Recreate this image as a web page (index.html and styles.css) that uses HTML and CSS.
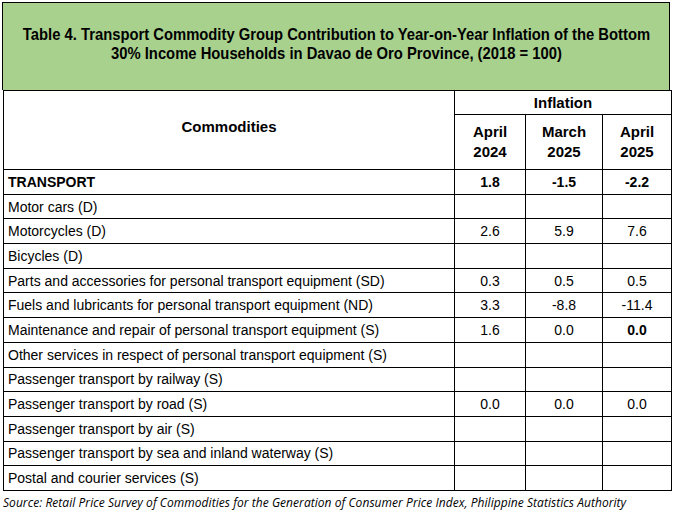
FILE: index.html
```html
<!DOCTYPE html>
<html>
<head>
<meta charset="utf-8">
<link rel="stylesheet" href="styles.css">
</head>
<body>
<div class="page">
  <div class="title">
    <p>Table 4. Transport Commodity Group Contribution to Year-on-Year Inflation of the Bottom<br>30% Income Households in Davao de Oro Province, (2018 = 100)</p>
  </div>
  <table class="data">
    <colgroup>
      <col class="c-name"><col class="c-a"><col class="c-b"><col class="c-c">
    </colgroup>
    <thead>
      <tr class="h1">
        <th rowspan="2" class="commod">Commodities</th>
        <th colspan="3" class="infl">Inflation</th>
      </tr>
      <tr class="h2">
        <th>April<br>2024</th>
        <th>March<br>2025</th>
        <th>April<br>2025</th>
      </tr>
    </thead>
    <tbody>
      <tr class="bold"><td>TRANSPORT</td><td>1.8</td><td>-1.5</td><td>-2.2</td></tr>
      <tr><td>Motor cars (D)</td><td></td><td></td><td></td></tr>
      <tr><td>Motorcycles (D)</td><td>2.6</td><td>5.9</td><td>7.6</td></tr>
      <tr><td>Bicycles (D)</td><td></td><td></td><td></td></tr>
      <tr><td>Parts and accessories for personal transport equipment (SD)</td><td>0.3</td><td>0.5</td><td>0.5</td></tr>
      <tr><td>Fuels and lubricants for personal transport equipment (ND)</td><td>3.3</td><td>-8.8</td><td>-11.4</td></tr>
      <tr><td>Maintenance and repair of personal transport equipment (S)</td><td>1.6</td><td>0.0</td><td class="b">0.0</td></tr>
      <tr><td>Other services in respect of personal transport equipment (S)</td><td></td><td></td><td></td></tr>
      <tr><td>Passenger transport by railway (S)</td><td></td><td></td><td></td></tr>
      <tr><td>Passenger transport by road (S)</td><td>0.0</td><td>0.0</td><td>0.0</td></tr>
      <tr><td>Passenger transport by air (S)</td><td></td><td></td><td></td></tr>
      <tr><td>Passenger transport by sea and inland waterway (S)</td><td></td><td></td><td></td></tr>
      <tr><td>Postal and courier services (S)</td><td></td><td></td><td></td></tr>
    </tbody>
  </table>
  <p class="source">Source: Retail Price Survey of Commodities for the Generation of Consumer Price Index, Philippine Statistics Authority</p>
</div>
</body>
</html>
```

FILE: styles.css
```css
html, body {
  margin: 0;
  padding: 0;
  background: #ffffff;
}
.page {
  padding: 2px 0 0 2px;
  width: 669px;
}
.title {
  background: #a9d18e;
  border: 1px solid #000;
  border-bottom: none;
  height: 87px;
  width: 666px;
  box-sizing: content-box;
  display: flex;
  align-items: flex-start;
  justify-content: center;
  overflow: hidden;
}
.title p {
  flex: none;
  margin: 22px 0 0 0;
  font-family: "Liberation Sans", Arial, sans-serif;
  font-weight: bold;
  font-size: 17px;
  line-height: 19px;
  text-align: center;
  white-space: nowrap;
  color: #000;
  transform: scaleX(0.87);
  transform-origin: center top;
}
.data {
  border-collapse: collapse;
  margin-left: 1px;
  width: 668px;
  table-layout: fixed;
  font-family: "Liberation Sans", Arial, sans-serif;
  font-size: 14px;
  color: #000;
}
.c-name { width: 451px; }
.c-a { width: 71px; }
.c-b { width: 77px; }
.c-c { width: 69px; }
.data th, .data td {
  border: 1px solid #000;
  padding: 0;
}
.data th {
  font-family: "Liberation Sans", Arial, sans-serif;
  font-weight: bold;
  font-size: 15px;
  line-height: 20px;
  text-align: center;
}
.data th.commod {
  vertical-align: top;
  padding-top: 26px;
}
.h1 { height: 24px; }
.h2 { height: 55px; }
.data tbody tr { height: 24.7px; }
.data td {
  text-align: center;
  line-height: 16px;
}
.data td:first-child {
  text-align: left;
  padding-left: 4px;
}
.bold td {
  font-weight: bold;
}
.data td.b { font-weight: bold; }
.source {
  margin: 3px 0 0 1px;
  font-family: "Open Sans", sans-serif;
  font-style: italic;
  font-size: 12px;
  letter-spacing: 0.05px;
  color: #000;
  white-space: nowrap;
}
```
